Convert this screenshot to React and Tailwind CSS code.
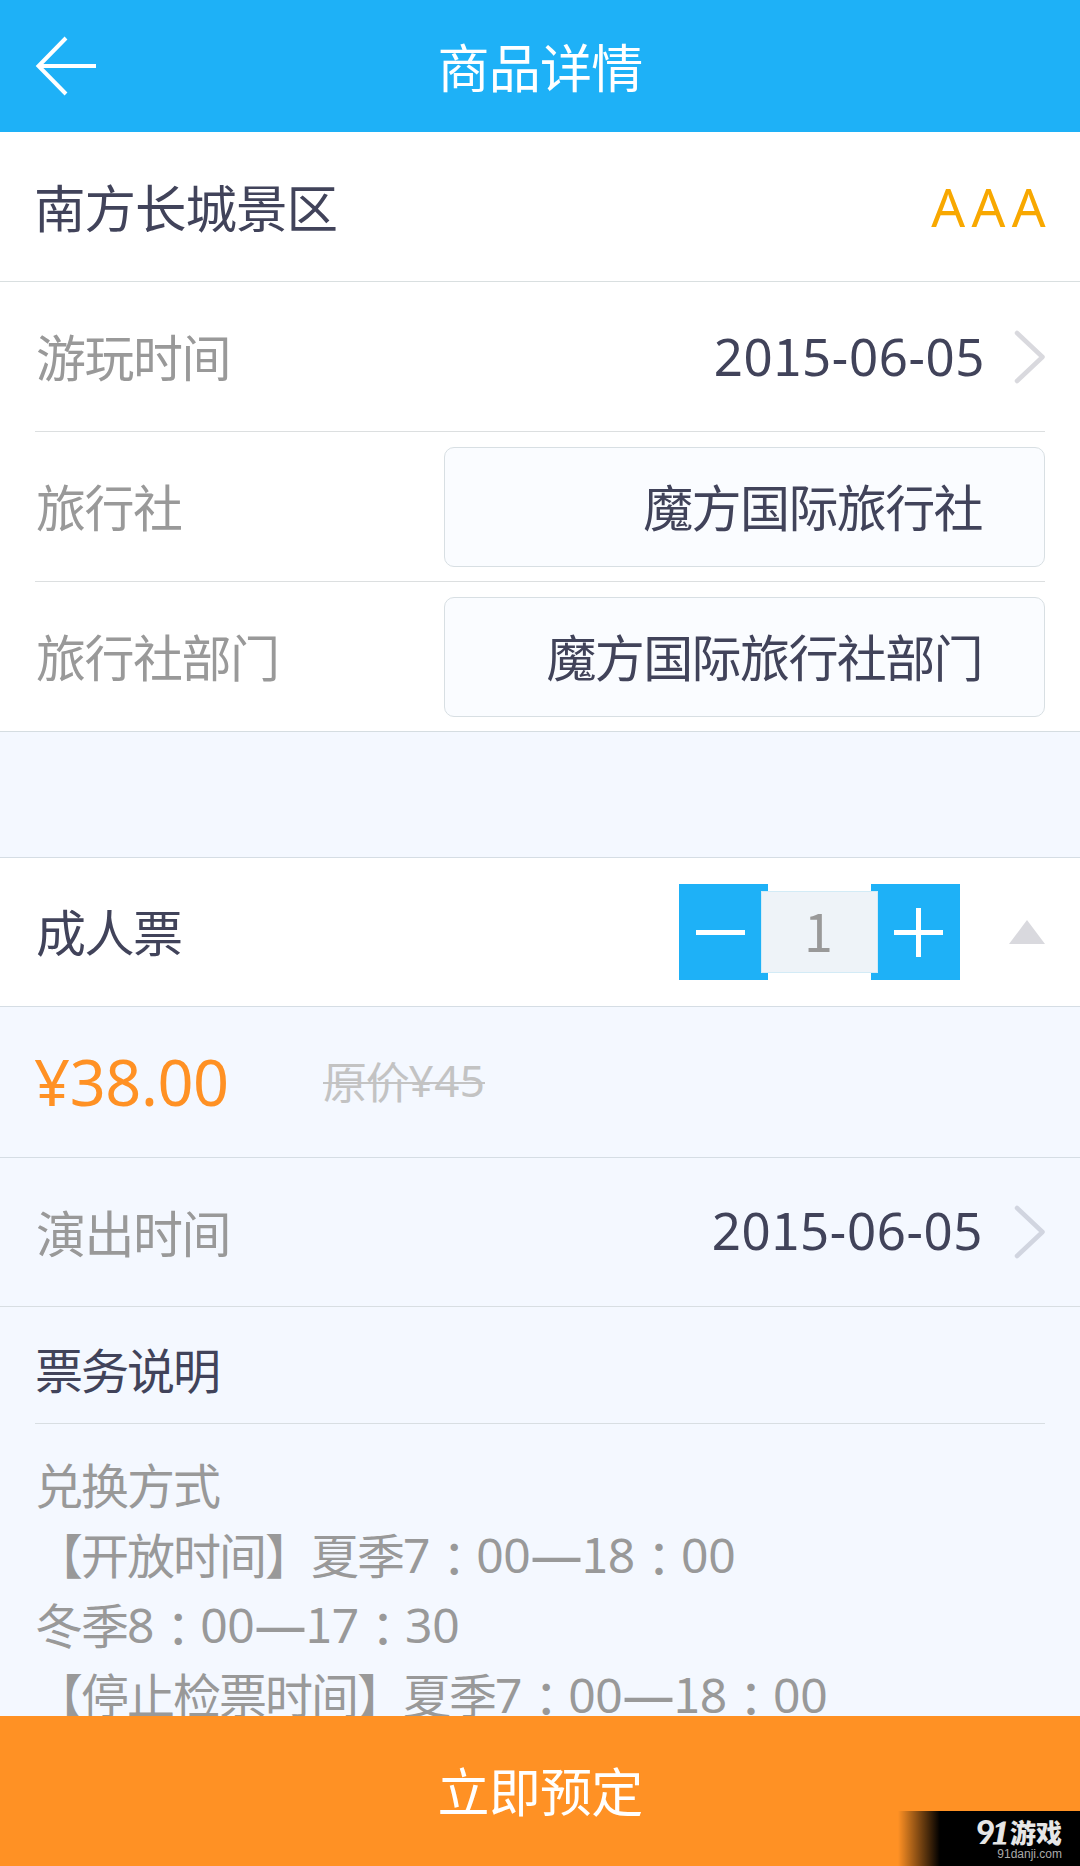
import { useState } from "react";

const infoRows = [
  { id: 1, label: "旅行社", value: "魔方国际旅行社" },
  { id: 2, label: "旅行社部门", value: "魔方国际旅行社部门" },
];

const notes = [
  "兑换方式",
  "【开放时间】夏季7：00—18：00",
  "冬季8：00—17：30",
  "【停止检票时间】夏季7：00—18：00",
];

const ChevronRight = ({ className }) => (
  <svg className={className} width="31" height="54" viewBox="0 0 31 54" fill="none">
    <path
      d="M3 3L28.5 27L3 51"
      stroke="currentColor"
      strokeWidth="4.5"
      strokeLinecap="round"
      strokeLinejoin="round"
    />
  </svg>
);

// Latin digits, with the "1" that has a foot
const Digits = ({ children }) => (
  <span className="font-['Noto_Sans',sans-serif]">
    {children.split(/(1)/).map((part, i) =>
      part === "1" ? (
        <span key={i} className="font-['Noto_Sans_CJK_SC',sans-serif]">
          1
        </span>
      ) : (
        part
      )
    )}
  </span>
);

// Digits, colons and dashes need their own spacing inside Chinese text
const NoteLine = ({ text }) => (
  <p className="h-[70px] whitespace-nowrap">
    {text.split(/(\d+|：|—)/).map((part, i) => {
      if (/^\d+$/.test(part)) {
        return (
          <span key={i} className="relative -top-px tracking-[-0.3px]">
            <Digits>{part}</Digits>
          </span>
        );
      }
      if (part === "：") {
        return (
          <span
            key={i}
            lang="zh-TW"
            className="relative top-[3px] font-['Noto_Sans_CJK_TC',sans-serif] tracking-[-2px]"
          >
            {part}
          </span>
        );
      }
      if (part === "—") {
        return (
          <span
            key={i}
            className="font-['Noto_Sans',sans-serif] text-[52px] leading-none tracking-[-1px]"
          >
            {part}
          </span>
        );
      }
      return part;
    })}
  </p>
);

const ProductDetail = () => {
  const [count, setCount] = useState(1);
  const [open, setOpen] = useState(true);

  return (
    <div
      lang="zh-CN"
      className="w-[1080px] h-[1866px] flex flex-col overflow-hidden bg-[#f4f8ff] text-[#41435a] font-['Noto_Sans_CJK_SC',sans-serif]"
    >
      {/* Header */}
      <header className="h-[132px] shrink-0 grid grid-cols-[1fr_auto_1fr] items-center bg-[#1eb1f7] text-white">
        <button className="ml-[35px] w-16">
          <svg width="64" height="60" viewBox="0 0 64 60" fill="none">
            <path d="M31 2L3.5 30L31 58M3.5 30H61" stroke="currentColor" strokeWidth="4" />
          </svg>
        </button>
        <h1 className="text-[52px] leading-none tracking-[-0.7px]">商品详情</h1>
      </header>

      {/* Basic info */}
      <section className="shrink-0 bg-white border-b border-[#d5dde1]">
        <div className="h-[150px] px-[35px] flex items-center justify-between border-b border-[#d9dfe0]">
          <h2 className="mb-0.5 -ml-px text-[51.5px] leading-none tracking-[-1px]">南方长城景区</h2>
          <span className="-mr-[7px] font-['Noto_Sans',sans-serif] text-[53px] leading-none tracking-[6.4px] text-[#f8a800]">
            AAA
          </span>
        </div>
        <div className="mx-[35px] h-[150px] flex items-center border-b border-[#dcdfe0]">
          <span className="mb-1 ml-px text-[50px] leading-none tracking-[-1.5px] text-[#999]">
            游玩时间
          </span>
          <span className="mb-0.5 ml-auto mr-[29px] text-[51px] leading-none tracking-[0.6px]">
            <Digits>2015-06-05</Digits>
          </span>
          <ChevronRight className="text-[#d9d9de]" />
        </div>
        {infoRows.map((row) => (
          <div
            key={row.id}
            className="mx-[35px] h-[150px] flex items-center justify-between border-b border-[#dcdfe0] last:border-b-0 last:h-[149px]"
          >
            <span className="mb-1 ml-px text-[50px] leading-none tracking-[-1.5px] text-[#999]">
              {row.label}
            </span>
            <div className="w-[601px] h-[120px] pr-[62px] flex items-center justify-end rounded-[10px] border border-[#d8dfe3] bg-[#fafcff]">
              <span className="mb-1 text-[50px] leading-none tracking-[-1.6px]">
                {row.value}
              </span>
            </div>
          </div>
        ))}
      </section>

      {/* Ticket */}
      <section className="mt-[125px] h-[150px] shrink-0 px-[35px] flex items-center bg-white border-y border-[#d5dde4]">
        <h3 className="mb-1 ml-px text-[50px] leading-none tracking-[-1.5px]">成人票</h3>
        <div className="ml-auto flex items-center text-white">
          <button
            className="w-[89px] h-24 pl-[17px] bg-[#1eb1f7]"
            onClick={() => setCount(Math.max(1, count - 1))}
          >
            <span className="block w-[49px] h-[5px] bg-white" />
          </button>
          <div className="z-10 w-[117px] h-[82px] -mx-[7px] flex items-center justify-center border border-[#d3ebf6] bg-[#eef3f8]">
            <span className="mb-1 mr-0.5 text-[52px] leading-none text-[#999]">{count}</span>
          </div>
          <button
            className="w-[89px] h-24 pl-[23px] bg-[#1eb1f7]"
            onClick={() => setCount(count + 1)}
          >
            <svg width="49" height="49" viewBox="0 0 49 49">
              <path d="M0 24.5H49M24.5 0V49" stroke="currentColor" strokeWidth="5" />
            </svg>
          </button>
        </div>
        <button className="ml-[49px]" onClick={() => setOpen(!open)}>
          <svg width="36" height="24" viewBox="0 0 36 24">
            <path d="M18 0L36 24H0Z" fill="#d9d9de" />
          </svg>
        </button>
      </section>

      {open && (
        <section className="flex-1 min-h-0 overflow-hidden">
          {/* Price */}
          <div className="h-[151px] px-[35px] flex items-center border-b border-[#d5dde4]">
            <span className="mb-0.5 -ml-px w-[289px] font-['Noto_Sans',sans-serif] text-[63px] leading-none tracking-[-0.4px] text-[#ff9124]">
              ¥38.00
            </span>
            <span className="relative mb-0.5 text-[44px] leading-none tracking-[-1.2px] text-[#c3c3c3]">
              原价
              <span className="relative -top-0.5 font-['Noto_Sans',sans-serif] tracking-[0.4px]">
                ¥45
              </span>
              <span className="absolute left-0 right-0 top-6 h-0.5 bg-[#c3c3c3]" />
            </span>
          </div>

          <div className="h-[149px] px-[35px] flex items-center border-b border-[#d8dee2]">
            <span className="mb-[3px] ml-px text-[50px] leading-none tracking-[-1.5px] text-[#999]">
              演出时间
            </span>
            <span className="mb-1.5 ml-auto mr-[31px] text-[51px] leading-none tracking-[0.6px]">
              <Digits>2015-06-05</Digits>
            </span>
            <ChevronRight className="text-[#d1d5e0]" />
          </div>

          {/* Notes */}
          <div className="mx-[35px] h-[117px] pt-1.5 flex items-center border-b border-[#d8dee2]">
            <h3 className="text-[48px] leading-none tracking-[-2px]">票务说明</h3>
          </div>
          <div className="px-[35px] pt-6 text-[48px] leading-[70px] tracking-[-2px] text-[#999]">
            {notes.map((note) => (
              <NoteLine key={note} text={note} />
            ))}
          </div>
        </section>
      )}

      {/* Footer */}
      <footer className="relative h-[150px] shrink-0 flex items-center justify-center bg-[#ff9124] text-white">
        <button className="mb-0.5 text-[52px] leading-none tracking-[-0.7px]">立即预定</button>
        <div className="absolute right-0 bottom-0 w-[182px] h-[55px] pt-[7px] pr-[18px] flex flex-col items-end bg-linear-to-r from-transparent to-black to-[42px]">
          <div className="flex items-center text-[#e6e6e6] leading-[26px]">
            <span className="mr-1 font-['Lato',sans-serif] text-[33px] font-black tracking-[-3px]">
              9
              <span className="font-['Liberation_Serif',serif] font-bold italic [-webkit-text-stroke:1px_#e6e6e6]">
                1
              </span>
            </span>
            <span className="text-[26px] font-black">游戏</span>
          </div>
          <span className="mt-px font-['Liberation_Sans',sans-serif] text-[12px] leading-[14px] text-[#aaa]">
            91danji.com
          </span>
        </div>
      </footer>
    </div>
  );
};

export default function App() {
  return <ProductDetail />;
}
